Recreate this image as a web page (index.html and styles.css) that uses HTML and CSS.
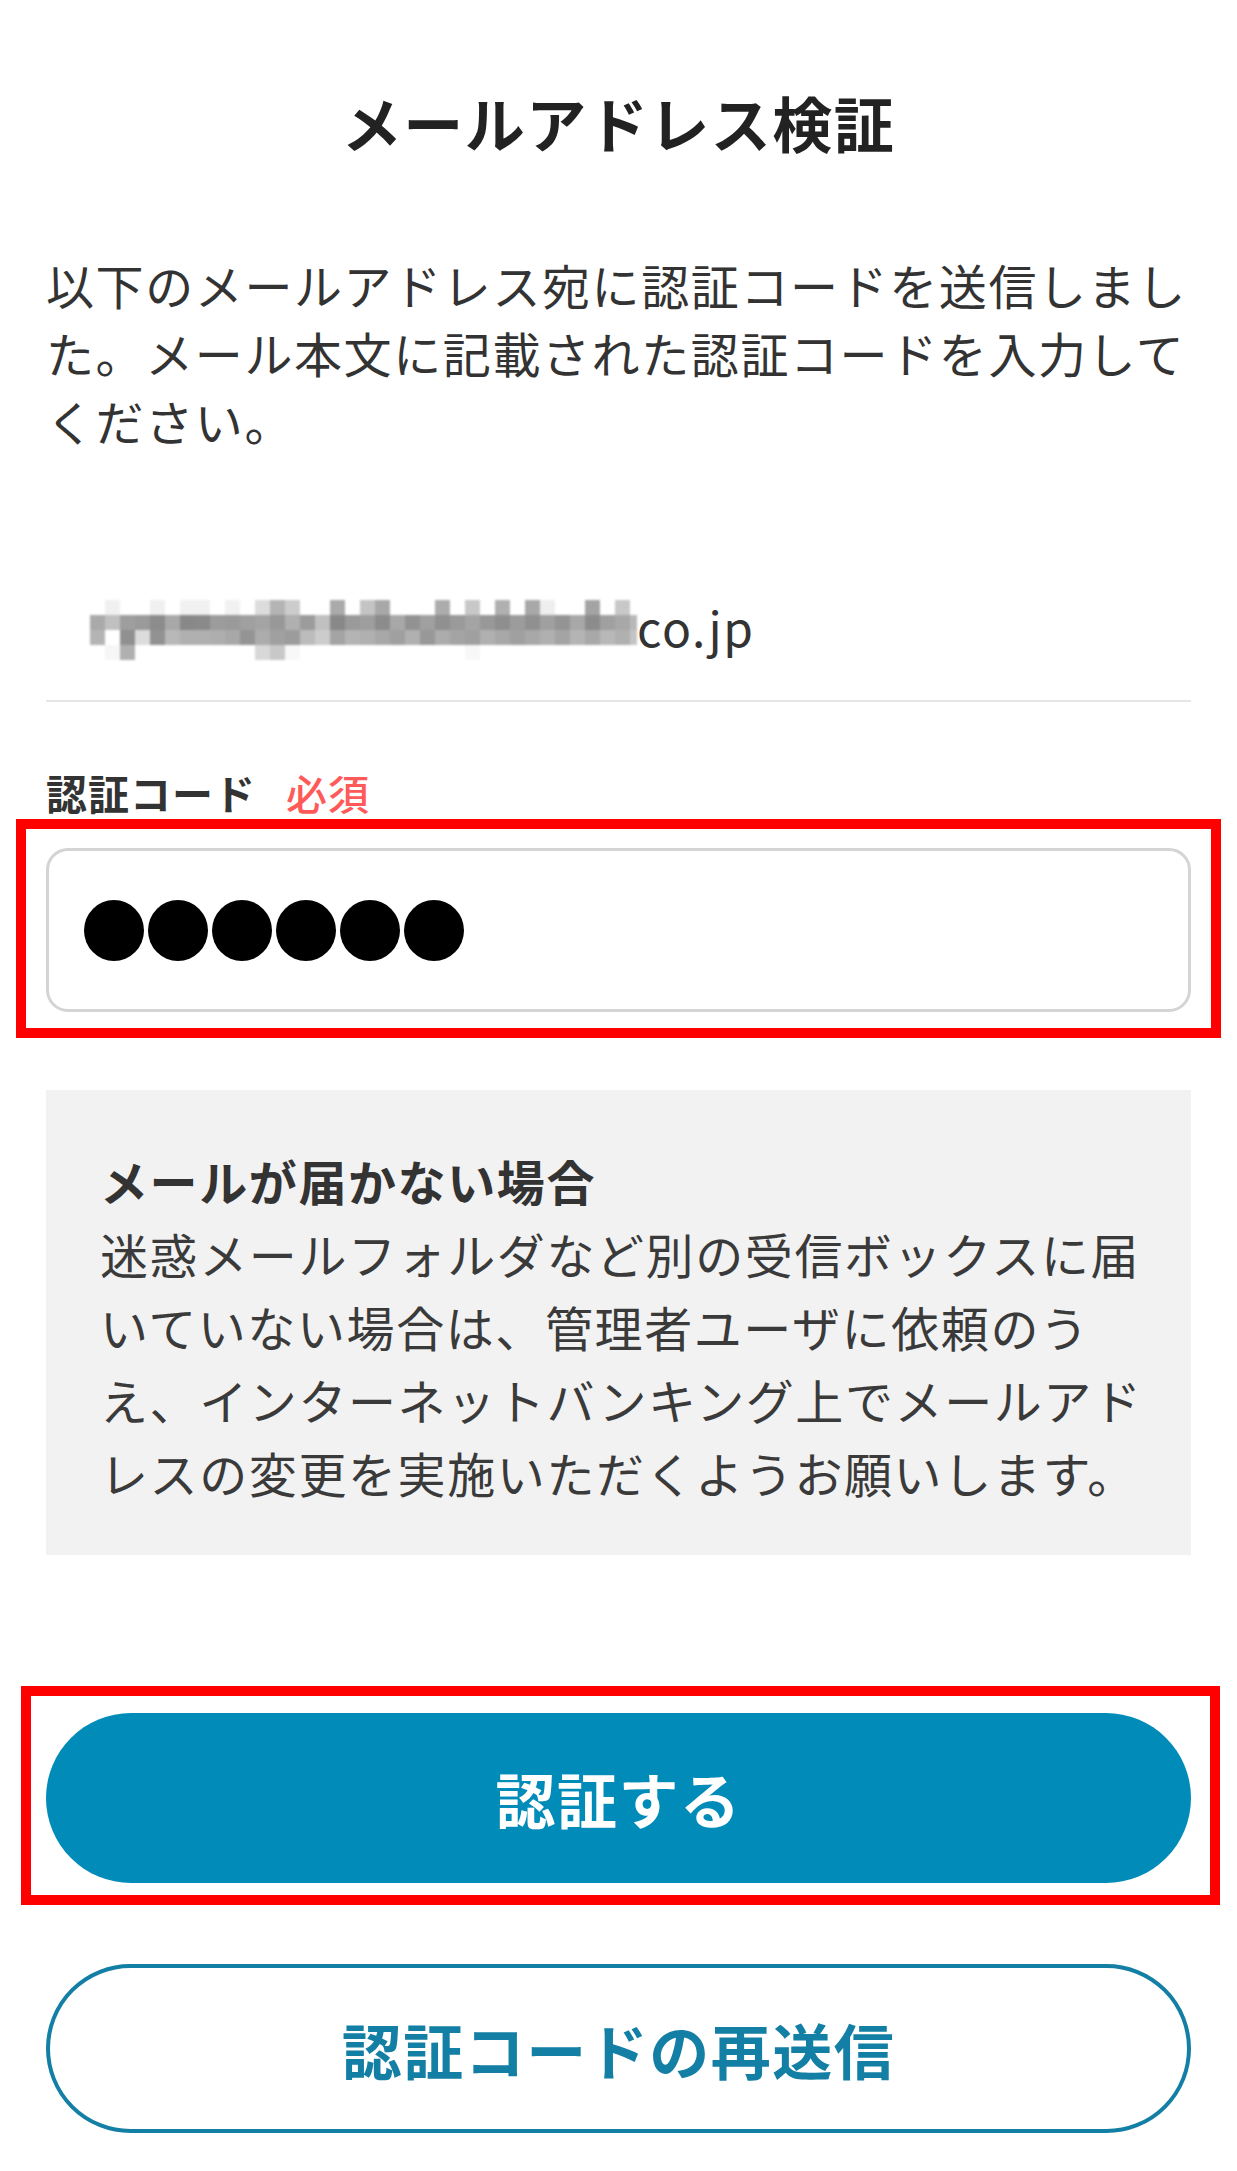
FILE: index.html
```html
<!DOCTYPE html>
<html lang="ja">
<head>
<meta charset="utf-8">
<title>メールアドレス検証</title>
<link rel="stylesheet" href="styles.css">
</head>
<body>
<main class="page">
  <h1 class="title">メールアドレス検証</h1>
  <p class="lead">以下のメールアドレス宛に認証コードを送信しました。メール本文に記載された認証コードを入力してください。</p>

  <div class="email-row">
    <svg class="email-mask" width="547" height="60" viewBox="0 0 547 60" aria-hidden="true">
      <g shape-rendering="crispEdges">
        <!-- row 1 -->
        <rect x="15" y="0" width="15" height="15" fill="#f0f0f0"/>
        <rect x="60" y="0" width="15" height="15" fill="#f0f0f0"/>
        <rect x="90" y="0" width="30" height="15" fill="#f1f1f1"/>
        <rect x="135" y="0" width="15" height="15" fill="#f1f1f1"/>
        <rect x="165" y="0" width="15" height="15" fill="#dcdcdc"/>
        <rect x="180" y="0" width="15" height="15" fill="#b4b4b4"/>
        <rect x="195" y="0" width="15" height="15" fill="#cccccc"/>
        <rect x="240" y="0" width="15" height="15" fill="#aaaaaa"/>
        <rect x="270" y="0" width="15" height="15" fill="#c4c4c4"/>
        <rect x="285" y="0" width="15" height="15" fill="#a8a8a8"/>
        <rect x="345" y="0" width="15" height="15" fill="#acacac"/>
        <rect x="375" y="0" width="15" height="15" fill="#c8c8c8"/>
        <rect x="405" y="0" width="15" height="15" fill="#b0b0b0"/>
        <rect x="435" y="0" width="15" height="15" fill="#a8a8a8"/>
        <rect x="450" y="0" width="15" height="15" fill="#eeeeee"/>
        <rect x="495" y="0" width="15" height="15" fill="#a4a4a4"/>
        <rect x="525" y="0" width="15" height="15" fill="#c8c8c8"/>
        <!-- row 2 -->
        <rect x="0" y="15" width="15" height="15" fill="#aaaaaa"/>
        <rect x="15" y="15" width="15" height="15" fill="#c0c0c0"/>
        <rect x="30" y="15" width="15" height="15" fill="#9e9e9e"/>
        <rect x="45" y="15" width="15" height="15" fill="#9a9a9a"/>
        <rect x="60" y="15" width="15" height="15" fill="#8c8c8c"/>
        <rect x="75" y="15" width="15" height="15" fill="#a8a8a8"/>
        <rect x="90" y="15" width="15" height="15" fill="#888888"/>
        <rect x="105" y="15" width="15" height="15" fill="#8a8a8a"/>
        <rect x="120" y="15" width="15" height="15" fill="#9c9c9c"/>
        <rect x="135" y="15" width="15" height="15" fill="#9a9a9a"/>
        <rect x="150" y="15" width="15" height="15" fill="#a0a0a0"/>
        <rect x="165" y="15" width="15" height="15" fill="#a4a4a4"/>
        <rect x="180" y="15" width="15" height="15" fill="#989898"/>
        <rect x="195" y="15" width="15" height="15" fill="#b0b0b0"/>
        <rect x="210" y="15" width="15" height="15" fill="#9c9c9c"/>
        <rect x="225" y="15" width="15" height="15" fill="#c0c0c0"/>
        <rect x="240" y="15" width="15" height="15" fill="#888888"/>
        <rect x="255" y="15" width="15" height="15" fill="#9a9a9a"/>
        <rect x="270" y="15" width="15" height="15" fill="#9e9e9e"/>
        <rect x="285" y="15" width="15" height="15" fill="#8c8c8c"/>
        <rect x="300" y="15" width="15" height="15" fill="#a8a8a8"/>
        <rect x="315" y="15" width="15" height="15" fill="#929292"/>
        <rect x="330" y="15" width="15" height="15" fill="#a0a0a0"/>
        <rect x="345" y="15" width="15" height="15" fill="#909090"/>
        <rect x="360" y="15" width="15" height="15" fill="#9a9a9a"/>
        <rect x="375" y="15" width="15" height="15" fill="#a4a4a4"/>
        <rect x="390" y="15" width="15" height="15" fill="#989898"/>
        <rect x="405" y="15" width="15" height="15" fill="#8e8e8e"/>
        <rect x="420" y="15" width="15" height="15" fill="#9c9c9c"/>
        <rect x="435" y="15" width="15" height="15" fill="#909090"/>
        <rect x="450" y="15" width="15" height="15" fill="#a0a0a0"/>
        <rect x="465" y="15" width="15" height="15" fill="#949494"/>
        <rect x="480" y="15" width="15" height="15" fill="#a8a8a8"/>
        <rect x="495" y="15" width="15" height="15" fill="#8c8c8c"/>
        <rect x="510" y="15" width="15" height="15" fill="#a0a0a0"/>
        <rect x="525" y="15" width="15" height="15" fill="#a8a8a8"/>
        <rect x="540" y="15" width="7" height="15" fill="#b8b8b8"/>
        <!-- row 3 -->
        <rect x="0" y="30" width="15" height="15" fill="#b4b4b4"/>
        <rect x="30" y="30" width="15" height="15" fill="#909090"/>
        <rect x="45" y="30" width="15" height="15" fill="#dcdcdc"/>
        <rect x="60" y="30" width="15" height="15" fill="#929292"/>
        <rect x="75" y="30" width="15" height="15" fill="#b8b8b8"/>
        <rect x="90" y="30" width="30" height="15" fill="#b0b0b0"/>
        <rect x="120" y="30" width="15" height="15" fill="#aeaeae"/>
        <rect x="135" y="30" width="15" height="15" fill="#a8a8a8"/>
        <rect x="150" y="30" width="15" height="15" fill="#949494"/>
        <rect x="165" y="30" width="15" height="15" fill="#acacac"/>
        <rect x="180" y="30" width="15" height="15" fill="#a0a0a0"/>
        <rect x="195" y="30" width="15" height="15" fill="#9c9c9c"/>
        <rect x="210" y="30" width="15" height="15" fill="#bcbcbc"/>
        <rect x="225" y="30" width="15" height="15" fill="#cccccc"/>
        <rect x="240" y="30" width="15" height="15" fill="#a4a4a4"/>
        <rect x="255" y="30" width="15" height="15" fill="#b4b4b4"/>
        <rect x="270" y="30" width="15" height="15" fill="#b0b0b0"/>
        <rect x="285" y="30" width="15" height="15" fill="#a8a8a8"/>
        <rect x="300" y="30" width="15" height="15" fill="#a0a0a0"/>
        <rect x="315" y="30" width="15" height="15" fill="#b0b0b0"/>
        <rect x="330" y="30" width="15" height="15" fill="#989898"/>
        <rect x="345" y="30" width="15" height="15" fill="#acacac"/>
        <rect x="360" y="30" width="15" height="15" fill="#a4a4a4"/>
        <rect x="375" y="30" width="15" height="15" fill="#a0a0a0"/>
        <rect x="390" y="30" width="15" height="15" fill="#b0b0b0"/>
        <rect x="405" y="30" width="15" height="15" fill="#a8a8a8"/>
        <rect x="420" y="30" width="15" height="15" fill="#a0a0a0"/>
        <rect x="435" y="30" width="15" height="15" fill="#a8a8a8"/>
        <rect x="450" y="30" width="15" height="15" fill="#b0b0b0"/>
        <rect x="465" y="30" width="15" height="15" fill="#a4a4a4"/>
        <rect x="480" y="30" width="15" height="15" fill="#b4b4b4"/>
        <rect x="495" y="30" width="15" height="15" fill="#a8a8a8"/>
        <rect x="510" y="30" width="15" height="15" fill="#b8b8b8"/>
        <rect x="525" y="30" width="15" height="15" fill="#b0b0b0"/>
        <rect x="540" y="30" width="7" height="15" fill="#c4c4c4"/>
        <!-- row 4 -->
        <rect x="15" y="45" width="15" height="15" fill="#f6f6f6"/>
        <rect x="30" y="45" width="15" height="15" fill="#b0b0b0"/>
        <rect x="165" y="45" width="15" height="15" fill="#d8d8d8"/>
        <rect x="180" y="45" width="15" height="15" fill="#c8c8c8"/>
        <rect x="195" y="45" width="15" height="15" fill="#f8f8f8"/>
        <rect x="375" y="45" width="15" height="15" fill="#f8f8f8"/>
      </g>
    </svg>
    <span class="email-domain">co.jp</span>
  </div>

  <label class="field-label" for="code">認証コード<span class="required">必須</span></label>
  <div class="code-field is-marked" id="code" role="textbox" aria-label="認証コード">
    <span class="dot"></span><span class="dot"></span><span class="dot"></span><span class="dot"></span><span class="dot"></span><span class="dot"></span>
  </div>

  <section class="notice">
    <h2 class="notice-title">メールが届かない場合</h2>
    <p class="notice-text">迷惑メールフォルダなど別の受信ボックスに届いていない場合は、管理者ユーザに依頼のうえ、インターネットバンキング上でメールアドレスの変更を実施いただくようお願いします。</p>
  </section>

  <button class="btn btn-primary is-marked" type="button">認証する</button>
  <button class="btn btn-secondary" type="button">認証コードの再送信</button>
</main>
</body>
</html>
```

FILE: styles.css
```css
* {
  box-sizing: border-box;
}

html,
body {
  margin: 0;
  background: #ffffff;
}

body {
  font-family: "Noto Sans CJK JP", "Noto Sans", sans-serif;
  color: #333333;
}

.page {
  display: flex;
  flex-direction: column;
  padding: 82px 46px 38px;
}

.title {
  margin: 0;
  font-size: 60px;
  line-height: 80px;
  font-weight: 700;
  letter-spacing: 1.5px;
  text-align: center;
  color: #222222;
}

.lead {
  margin: 88px 0 0;
  font-size: 48px;
  line-height: 68px;
  letter-spacing: 1.6px;
}

/* registered address, local part masked */
.email-row {
  display: flex;
  align-items: flex-end;
  margin-top: 138px;
  padding: 0 0 40px 44px;
  border-bottom: 2px solid #e6e6e6;
}

.email-mask {
  display: block;
  flex: none;
  filter: blur(0.8px);
}

.email-domain {
  font-size: 48px;
  line-height: 68px;
  letter-spacing: 1.6px;
}

.field-label {
  display: block;
  margin-top: 62px;
  font-size: 41px;
  line-height: 56px;
  font-weight: 700;
  letter-spacing: 1px;
  color: #333333;
}

.required {
  margin-left: 30px;
  color: #ff5a5a;
  font-weight: 500;
}

.code-field {
  position: relative;
  display: flex;
  align-items: center;
  gap: 4px;
  height: 164px;
  margin-top: 28px;
  padding-left: 35px;
  border: 3px solid #d4d4d4;
  border-radius: 22px;
  background: #ffffff;
}

.dot {
  width: 60px;
  height: 61px;
  border-radius: 50%;
  background: #000000;
}

.notice {
  margin-top: 78px;
  padding: 54px 40px 46px 54px;
  background: #f2f2f2;
}

.notice-title {
  margin: 0;
  font-size: 48px;
  line-height: 73px;
  font-weight: 700;
  letter-spacing: 1.6px;
  color: #333333;
}

.notice-text {
  margin: 0;
  font-size: 48px;
  line-height: 73px;
  letter-spacing: 1.6px;
  color: #3a3a3a;
}

.btn {
  position: relative;
  display: block;
  width: 100%;
  border-radius: 999px;
  font-family: inherit;
  font-size: 60px;
  font-weight: 700;
  letter-spacing: 1.5px;
  line-height: 1;
  cursor: pointer;
}

.btn-primary {
  height: 170px;
  margin-top: 158px;
  border: 0;
  background: #008bb9;
  color: #ffffff;
}

.btn-secondary {
  height: 169px;
  margin-top: 81px;
  border: 4px solid #137fa5;
  background: #ffffff;
  color: #137fa5;
}

/* red callout frame drawn around the highlighted controls */
.is-marked::after {
  content: "";
  position: absolute;
  border: 10px solid #ff0000;
  pointer-events: none;
}

.code-field.is-marked::after {
  top: -32px;
  right: -33px;
  bottom: -29px;
  left: -33px;
}

.btn-primary.is-marked::after {
  top: -27px;
  right: -29px;
  bottom: -22px;
  left: -25px;
}
```
